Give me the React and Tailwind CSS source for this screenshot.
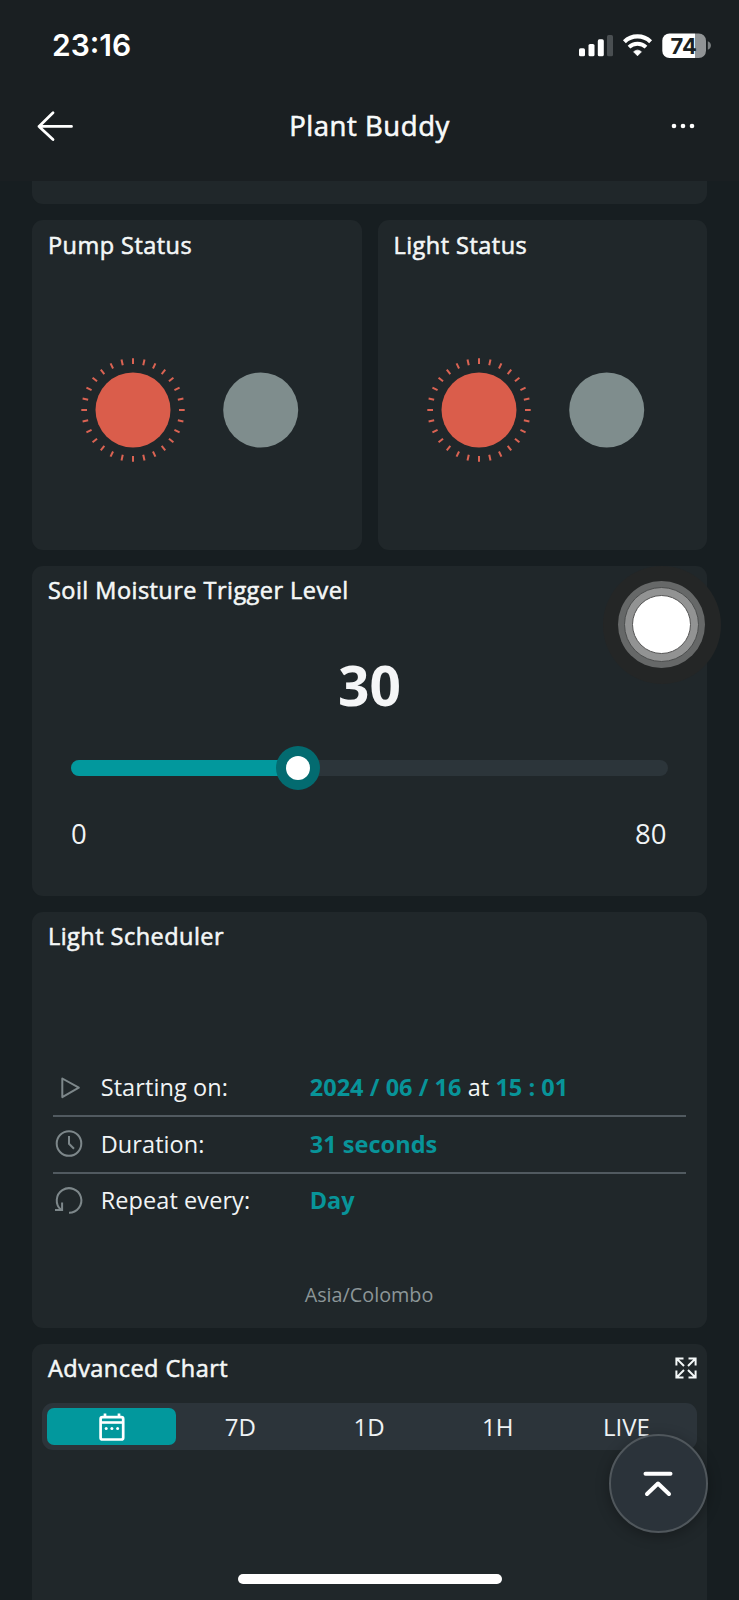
import React from "react";

const TICKS = Array.from({ length: 28 }, (_, i) => (i * 360) / 28);

function StatusBar() {
  return (
    <div className="flex h-[91px] shrink-0 items-center justify-between pl-[52px] pr-[27px]">
      <span className="-mt-px font-[Inter,sans-serif] text-[30px] font-semibold leading-none text-white">23:16</span>
      <svg width="136" height="28" viewBox="0 0 136 28" fill="#fff">
        <rect x="3" y="16.3" width="6" height="8" rx="1.6" />
        <rect x="12.5" y="12" width="6" height="12.3" rx="1.6" />
        <rect x="21.8" y="7.3" width="6" height="17" rx="1.6" />
        <rect x="31" y="3" width="6" height="21.3" rx="1.6" fill="#4a4f52" />
        <g fill="none" stroke="#fff" strokeWidth="4.2">
          <path d="M48.4 9.7A19 19 0 0 1 74.6 9.7" />
          <path d="M53 15.2A12.2 12.2 0 0 1 70 15.2" strokeWidth="3.8" />
        </g>
        <path d="M57.6 19.8A6 6 0 0 1 65.4 19.8L61.5 23.8Z" strokeLinejoin="round" stroke="#fff" strokeWidth=".8" />
        <path d="M93.5 1.5H119V26H93.5A7.2 7.2 0 0 1 86.3 18.8V8.7A7.2 7.2 0 0 1 93.5 1.5Z" />
        <path d="M119 1.5H122.8A7.2 7.2 0 0 1 130 8.7V18.8A7.2 7.2 0 0 1 122.8 26H119Z" fill="#919496" />
        <path d="M131.8 9.3C136 10.8 136 16.2 131.8 17.7Z" fill="#7b7f81" />
        <text x="94.5" y="21.6" className="font-[Inter,sans-serif]" fontSize="22" fontWeight="700" fill="#1a1f22" textLength="26.5">74</text>
      </svg>
    </div>
  );
}

function Header() {
  return (
    <div className="flex h-[70px] shrink-0 items-center justify-between pl-[36px] pr-[42px]">
      <svg width="40" height="32" viewBox="0 0 40 32" fill="none" stroke="#fff" strokeWidth="2.8" strokeLinecap="round" strokeLinejoin="round">
        <path d="M3 16.4H35.5M17 2.8L3 16.4L17 29.6" />
      </svg>
      <h1 className="text-[27.5px] leading-none tracking-[0.55px] text-[#f8fafa] [-webkit-text-stroke:0.6px_#f8fafa]">Plant Buddy</h1>
      <svg width="34" height="10" viewBox="-6 0 34 10" fill="#fff">
        <circle cx="5" cy="5" r="2.3" />
        <circle cx="14" cy="5" r="2.3" />
        <circle cx="23" cy="5" r="2.3" />
      </svg>
    </div>
  );
}

function Title({ children }) {
  return <h2 className="h-[48px] shrink-0 pl-[16px] text-[23.5px] leading-[49px] tracking-[0.46px] text-[#f4f7f7] [-webkit-text-stroke:0.55px_#f4f7f7]">{children}</h2>;
}

function StatusCard({ title }) {
  return (
    <section className="h-[330px] flex-1 overflow-hidden rounded-[11px] bg-[#20272a]">
      <div className="pt-px">
        <Title>{title}</Title>
      </div>
      <svg width="329" height="281" viewBox="0 49 329 281">
        <circle cx="101" cy="190" r="37.5" fill="#da5d4b" />
        {TICKS.map((a) => (
          <line key={a} x1="101" y1="138.3" x2="101" y2="144" stroke="#da6353" strokeWidth="2" transform={`rotate(${a} 101 190)`} />
        ))}
        <circle cx="228.7" cy="190" r="37.5" fill="#7f8d8d" />
      </svg>
    </section>
  );
}

function SliderCard() {
  return (
    <section className="flex h-[330px] shrink-0 flex-col rounded-[11px] bg-[#20272a]">
      <Title>Soil Moisture Trigger Level</Title>
      <div className="mt-[43.5px] text-center text-[55px] font-bold leading-[56px] text-[#f5f6f7]">30</div>
      <div className="relative mx-[39px] mt-[46.5px] h-4 rounded-full bg-[#2c353a]">
        <div className="h-4 w-[227px] rounded-l-full bg-[#02989d]" />
        <div className="absolute left-[204.5px] -top-[14px] flex size-[44px] items-center justify-center rounded-full bg-[#036b70]">
          <div className="size-[24px] rounded-full bg-white" />
        </div>
      </div>
      <div className="mx-[39px] mt-[43px] flex justify-between pr-[1.5px] text-[27.5px] leading-[30px] text-[#f1f4f5]">
        <span>0</span>
        <span>80</span>
      </div>
    </section>
  );
}

function PlayIcon() {
  return <path d="M9.3 6.5L25.8 15.7L9.3 25.1Z" strokeLinejoin="round" />;
}

function ClockIcon() {
  return (
    <>
      <circle cx="16" cy="15.5" r="12.3" />
      <path d="M16 8V15.8L21 20.8" />
    </>
  );
}

function RepeatIcon() {
  return (
    <>
      <path d="M16 27.8A12.3 12.3 0 1 0 8 24.8" />
      <path d="M2 24.9H9.1V17.5" />
    </>
  );
}

function Row({ icon, label, divider, children }) {
  return (
    <div className={divider ? "flex h-[56.6px] items-center border-b-2 border-[#515a60]" : "flex h-[56.6px] items-center pb-[2px]"}>
      <svg className="-ml-[0.5px]" width="32" height="32" viewBox="0 0 32 32" fill="none" stroke="#7d878a" strokeWidth="2">{icon}</svg>
      <span className="ml-[15.9px] w-[209px] text-[23.5px] tracking-[0.08px] text-[#f1f4f5]">{label}</span>
      <span className="whitespace-pre text-[23.5px] font-bold tracking-[0.04px] text-[#089499]">{children}</span>
    </div>
  );
}

function SchedulerCard() {
  return (
    <section className="flex h-[416px] shrink-0 flex-col rounded-[11px] bg-[#20272a]">
      <Title>Light Scheduler</Title>
      <div className="ml-[21.3px] mr-[21.3px] mt-[100.9px] flex flex-col">
        <Row divider icon={<PlayIcon />} label="Starting on:">
          2024 / 06 / 16<span className="font-normal text-[#f4f7f7]"> at </span>15 : 01
        </Row>
        <Row divider icon={<ClockIcon />} label="Duration:">31 seconds</Row>
        <Row icon={<RepeatIcon />} label="Repeat every:">Day</Row>
      </div>
      <div className="mt-[52.5px] pr-px text-center text-[19.8px] leading-[24px] text-[#8c9698]">Asia/Colombo</div>
    </section>
  );
}

function ChartCard() {
  return (
    <section className="flex h-[300px] shrink-0 flex-col rounded-t-[11px] bg-[#20272a]">
      <div className="flex items-center justify-between pr-[9.5px]">
        <Title>Advanced Chart</Title>
        <svg className="mt-px" width="24" height="24" viewBox="0 0 24 24" fill="none" stroke="#f4f8f8" strokeWidth="2">
          <path d="M2.4 9.5V2.4H9.5M2.4 2.4L10 10M14.5 2.4H21.6V9.5M21.6 2.4L14 10M2.4 14.5V21.6H9.5M2.4 21.6L10 14M14.5 21.6H21.6V14.5M21.6 21.6L14 14" />
        </svg>
      </div>
      <div className="mx-[9.7px] mt-[11px] flex h-[47px] items-center rounded-[11px] bg-[#2c343a] pl-[5.5px] pr-[6.5px] pt-px text-center text-[24px] text-[#eef2f4]">
        <div className="flex h-[37.5px] flex-1 items-center justify-center rounded-[7px] bg-[#02989d]">
          <svg width="26" height="28" viewBox="0 0 26 28" fill="none" stroke="#fff" strokeWidth="2.7">
            <rect x="1.6" y="4.1" width="22.6" height="22.4" rx="1.8" />
            <path d="M1.6 9.5H24.2" strokeWidth="2.6" />
            <path d="M6 0.6V4M20 0.6V4" />
            <g fill="#fff" stroke="none">
              <circle cx="7.2" cy="15.5" r="1.5" />
              <circle cx="12.9" cy="15.5" r="1.5" />
              <circle cx="18.6" cy="15.5" r="1.5" />
            </g>
          </svg>
        </div>
        <div className="flex-1">7D</div>
        <div className="flex-1">1D</div>
        <div className="flex-1">1H</div>
        <div className="flex-1">LIVE</div>
      </div>
    </section>
  );
}

export default function App() {
  return (
    <div className="relative flex h-[1600px] w-[739px] flex-col overflow-hidden bg-[#171e21] font-['Open_Sans',sans-serif]">
      <div className="flex h-[181px] shrink-0 flex-col bg-[#1a1f22]">
        <StatusBar />
        <Header />
      </div>
      <main className="flex flex-col px-[32px]">
        <div className="h-[23px] rounded-b-[11px] bg-[#20272a]" />
        <div className="mt-4 flex gap-4">
          <StatusCard title="Pump Status" />
          <StatusCard title="Light Status" />
        </div>
        <div className="mt-[15.5px] flex flex-col gap-4">
          <SliderCard />
          <SchedulerCard />
          <ChartCard />
        </div>
      </main>
      <div className="absolute left-[602.8px] top-[565.5px] flex size-[118px] items-center justify-center rounded-full bg-[#242626]">
        <div className="flex size-[87px] items-center justify-center rounded-full bg-[#666868]">
          <div className="flex size-[75px] items-center justify-center rounded-full border border-[#4c4e4e] bg-[#929393]">
            <div className="size-[59px] rounded-full border border-[#555] bg-white" />
          </div>
        </div>
      </div>
      <div className="absolute left-[609px] top-[1434px] flex size-[98.5px] items-center justify-center rounded-full border-2 border-[#50575c] bg-[#2b333a] shadow-[0_3px_14px_rgba(0,0,0,0.3)]">
        <svg width="32" height="28" viewBox="0 0 32 28" fill="none" stroke="#fff" strokeWidth="4" strokeLinecap="round" strokeLinejoin="round">
          <path d="M3.5 4.8H28.5M5 25L16 14.5L27 25" />
        </svg>
      </div>
      <div className="absolute left-[237.7px] top-[1574px] h-[10px] w-[264.3px] rounded-full bg-white" />
    </div>
  );
}
